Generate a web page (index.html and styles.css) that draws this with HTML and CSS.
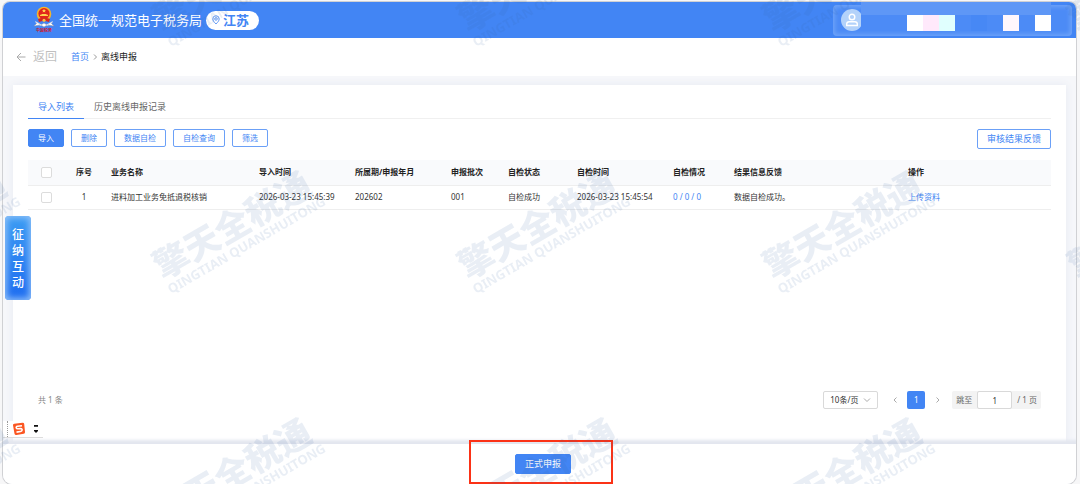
FILE: index.html
```html
<!DOCTYPE html>
<html lang="zh-CN">
<head>
    <meta charset="UTF-8">
    <meta name="viewport" content="width=device-width, initial-scale=1.0">
    <title>离线申报</title>
    <link rel="stylesheet" href="styles.css">
</head>
<body>
    <div class="window">
        <header class="topbar">
            <svg class="emblem" viewBox="0 0 20 28">
                <path d="M1 15 Q2 20 10 20 Q18 20 19 15 L17 16 Q10 21 3 16Z" fill="#d9dde6"/>
                <path d="M3 17 L0 20 L6 19 M17 17 L20 20 L14 19 M7 19 L10 17 L13 19 L10 21Z" fill="#fff" stroke="#8d94a6" stroke-width=".5"/>
                <circle cx="10" cy="8" r="7.3" fill="#f4b52b"/>
                <circle cx="10" cy="7.6" r="5.6" fill="#e1251b"/>
                <path d="M10 2.8l.6 1.3 1.4.1-1 .9.3 1.4-1.3-.7-1.3.7.3-1.4-1-.9 1.4-.1zM6 10h8v-1.2h-1.5V8h-5v.8H6z" fill="#ffd34d"/>
                <path d="M4 13 Q10 10.5 16 13 L15 16 Q10 14 5 16Z" fill="#d6281f"/>
                <circle cx="10" cy="14.2" r="1.5" fill="#f7c640"/>
                <text x="10" y="26" class="emblem-text">中国税务</text>
            </svg>
            <h1 class="site-name">全国统一规范电子税务局</h1>
            <button class="region">
                <svg class="pin" viewBox="0 0 10 12">
                    <path d="M5 11 C2 8 1 6.5 1 4.7 A4 4 0 0 1 9 4.7 C9 6.5 8 8 5 11Z"/>
                    <circle cx="5" cy="4.7" r="1.6"/>
                </svg>江苏
            </button>
            <div class="user">
                <span class="avatar">
                    <svg viewBox="0 0 14 14">
                        <circle cx="7" cy="4" r="2.8"/>
                        <path d="M1.7 12.5 V11 Q1.7 8.7 4.2 8.7 H9.8 Q12.3 8.7 12.3 11 V12.5Z"/>
                    </svg>
                </span>
                <div class="mask">
                    <i class="b0"></i><i class="w"></i><i class="pink"></i><i class="cyan"></i>
                    <i class="b1"></i><i class="b2"></i><i class="b1"></i><i class="rose"></i><i class="b1"></i><i class="w"></i>
                </div>
            </div>
        </header>

        <nav class="crumbs">
            <a class="back" href="#">
                <svg viewBox="0 0 10 10"><path d="M9.5 5H1M5 1L1 5l4 4"/></svg>返回
            </a>
            <a class="home" href="#">首页</a>
            <svg class="sep" viewBox="0 0 4 6"><path d="M1 .5L3.5 3 1 5.5"/></svg>
            <span>离线申报</span>
        </nav>

        <main class="content">
            <section class="card">
                <div class="tabs">
                    <button class="tab active">导入列表</button>
                    <button class="tab">历史离线申报记录</button>
                </div>

                <div class="toolbar">
                    <button class="btn primary">导入</button>
                    <button class="btn">删除</button>
                    <button class="btn">数据自检</button>
                    <button class="btn">自检查询</button>
                    <button class="btn">筛选</button>
                    <button class="btn large feedback">审核结果反馈</button>
                </div>

                <table class="list">
                    <colgroup>
                        <col class="c-check"><col class="c-seq"><col class="c-name"><col class="c-time">
                        <col class="c-time"><col class="c-batch"><col class="c-status"><col class="c-time">
                        <col class="c-result"><col class="c-info"><col>
                    </colgroup>
                    <thead>
                        <tr>
                            <th class="center"><input type="checkbox" aria-label="全选"></th>
                            <th class="center">序号</th>
                            <th>业务名称</th>
                            <th>导入时间</th>
                            <th>所属期/申报年月</th>
                            <th>申报批次</th>
                            <th>自检状态</th>
                            <th>自检时间</th>
                            <th>自检情况</th>
                            <th>结果信息反馈</th>
                            <th>操作</th>
                        </tr>
                    </thead>
                    <tbody>
                        <tr>
                            <td class="center"><input type="checkbox" aria-label="选择第1条"></td>
                            <td class="center">1</td>
                            <td>进料加工业务免抵退税核销</td>
                            <td>2026-03-23 15:45:39</td>
                            <td>202602</td>
                            <td>001</td>
                            <td>自检成功</td>
                            <td>2026-03-23 15:45:54</td>
                            <td><a href="#">0 / 0 / 0</a></td>
                            <td>数据自检成功。</td>
                            <td><a href="#">上传资料</a></td>
                        </tr>
                    </tbody>
                </table>

                <div class="pager">
                    <span class="total">共 1 条</span>
                    <div class="size">
                        <select aria-label="每页条数"><option>10条/页</option></select>
                        <svg viewBox="0 0 8 5"><path d="M1 .5l3 3 3-3"/></svg>
                    </div>
                    <button class="arrow" aria-label="上一页"><svg viewBox="0 0 4 6"><path d="M3.5 .5L1 3l2.5 2.5"/></svg></button>
                    <button class="page">1</button>
                    <button class="arrow" aria-label="下一页"><svg viewBox="0 0 4 6"><path d="M.5 .5L3 3 .5 5.5"/></svg></button>
                    <label class="jump">跳至 <input type="text" value="1"> / 1 页</label>
                </div>
            </section>
        </main>

        <footer class="actions">
            <div class="submit">
                <button class="btn primary large">正式申报</button>
                <span class="highlight"></span>
            </div>
        </footer>
    </div>

    <button class="interact">征纳互动</button>

    <div class="ime">
        <svg viewBox="0 0 14 14">
            <path d="M1 3.3Q.8 2 2.2 1.8L10.5.7Q12 .5 12.2 2L13 10Q13.2 11.5 11.7 11.8L4.5 13Q2.8 13.2 2.5 11.7Z" fill="#fb5622"/>
            <path d="M10 3.7L5.5 4.3Q3.8 4.7 4.3 6Q4.6 6.9 6 6.8L8.7 6.6Q10.2 6.7 10.1 8Q10 9.3 8.5 9.5L4.5 10.1" fill="none" stroke="#fff" stroke-width="1.6"/>
        </svg>
        <svg class="ime-menu" viewBox="0 0 4 8"><path d="M0 0h4v1.8H0zM0 5h4v1L2 8 0 6z"/></svg>
    </div>

    <svg class="watermark" aria-hidden="true">
        <defs>
            <pattern id="mark" x="100" y="130" width="305" height="247" patternUnits="userSpaceOnUse">
                <g transform="translate(64 152) rotate(-30)">
                    <text class="mark-cn" x="0" y="-2">擎天全税通</text>
                    <text class="mark-en" x="0" y="14">QINGTIAN QUANSHUITONG</text>
                </g>
            </pattern>
        </defs>
        <rect width="100%" height="100%" fill="url(#mark)"/>
    </svg>
</body>
</html>
```

FILE: styles.css
```css
* {
    box-sizing: border-box;
}

body {
    margin: 0;
    padding: 2px 4px 0 3px;
    min-height: 100vh;
    background: #f7f7f8;
    font-family: "Noto Sans", "Noto Sans CJK SC", sans-serif;
    font-size: 8px;
    line-height: 12px;
    color: #333;
    display: flex;
    overflow: hidden;
}

button, input, select {
    font: inherit;
    color: inherit;
    margin: 0;
}

button {
    padding: 0;
    border: none;
    background: none;
    cursor: pointer;
    white-space: nowrap;
}

a {
    color: #4285f4;
    text-decoration: none;
}

svg {
    fill: none;
    stroke-width: 1;
}

.window {
    flex: 1;
    min-width: 0;
    display: flex;
    flex-direction: column;
    background: #f6f7fa;
    border-radius: 7px 7px 9px 9px;
    box-shadow: 0 0 0 1px #d0d1d4;
    overflow: hidden;
}

/* header */
.topbar {
    height: 36px;
    padding: 0 4px 0 31px;
    background: #4285f4;
    display: flex;
    align-items: center;
}

.emblem {
    width: 20px;
    height: 28px;
}

.emblem-text {
    font-size: 4px;
    font-weight: bold;
    text-anchor: middle;
    fill: #c92035;
}

.site-name {
    margin: 0 4px 0 5px;
    font-size: 13px;
    line-height: 20px;
    font-weight: 400;
    color: #fff;
    white-space: nowrap;
}

.region {
    height: 19px;
    padding: 0 10px 0 6px;
    border-radius: 10px;
    background: #fff;
    color: #4285f4;
    font-size: 13px;
    line-height: 19px;
    font-weight: 700;
    display: flex;
    align-items: center;
    gap: 3px;
}

.pin {
    width: 8px;
    height: 10px;
    stroke: #4285f4;
}

.user {
    position: relative;
    width: 239px;
    height: 31px;
    margin-left: auto;
    padding-left: 8px;
    border-radius: 4px;
    background: #4c8bf6;
    box-shadow: inset 0 0 4px 2px #6ea3f8;
    display: flex;
    align-items: center;
}

.avatar {
    width: 22px;
    height: 22px;
    border-radius: 50%;
    background: #b3d2fa;
    display: flex;
    align-items: center;
    justify-content: center;
}

.avatar svg {
    width: 14px;
    height: 14px;
    stroke: #fff;
    stroke-width: 1.4;
}

.mask {
    position: absolute;
    top: -5px;
    right: 21px;
    width: 190px;
    height: 31px;
    padding-top: 15px;
    background: #5e97f6;
    display: flex;
}

.mask i {
    flex: 0 0 16px;
    background: #4c8bf6;
}

.mask .b0 { flex: 1; }
.mask .b2 { background: #4788f5; }
.mask .w { background: #fff; }
.mask .pink { background: #ffe9fb; }
.mask .cyan { background: #e0fffe; }
.mask .rose { background: #fff7fc; }

/* breadcrumb */
.crumbs {
    height: 38px;
    padding-left: 13px;
    background: #fff;
    font-size: 9px;
    display: flex;
    align-items: center;
    color: #222;
}

.back {
    margin-right: 14px;
    font-size: 12px;
    color: #bfbfbf;
    display: flex;
    align-items: center;
    gap: 7px;
}

.back svg {
    width: 10px;
    height: 10px;
    stroke: #aaa;
}

.sep {
    width: 4px;
    height: 6px;
    margin: 0 4px;
    stroke: #999;
}

/* card */
.content {
    flex: 1;
    padding: 9px 10px 0;
    display: flex;
}

.card {
    flex: 1;
    min-width: 0;
    padding: 11px 15px 35px;
    background: #fff;
    box-shadow: 0 0 8px #e6e9f2;
    display: flex;
    flex-direction: column;
}

.tabs {
    height: 23px;
    border-bottom: 1px solid #f0f0f0;
    display: flex;
}

.tab {
    height: 23px;
    padding: 0 10px;
    font-size: 9px;
    color: #666;
    border-bottom: 1px solid transparent;
}

.tab.active {
    color: #4285f4;
    border-color: #4285f4;
}

.toolbar {
    margin: 10px 0;
    height: 21px;
    display: flex;
    align-items: flex-start;
    gap: 7px;
}

.btn {
    height: 18px;
    padding: 0 9px;
    border: 1px solid #6ba0f7;
    border-radius: 2px;
    background: #fff;
    color: #4285f4;
}

.btn.primary {
    background: #4285f4;
    border-color: #4285f4;
    color: #fff;
}

.btn.large {
    height: 20px;
    font-size: 9px;
}

.feedback {
    margin-left: auto;
}

/* table */
.list {
    width: 100%;
    table-layout: fixed;
    border-collapse: collapse;
    white-space: nowrap;
}

.c-check { width: 36px; }
.c-seq { width: 40px; }
.c-name { width: 148px; }
.c-time { width: 96px; }
.c-batch { width: 57px; }
.c-status { width: 69px; }
.c-result { width: 61px; }
.c-info { width: 174px; }

.list th, .list td {
    height: 24px;
    padding: 0 7px;
    border-bottom: 1px solid #eee;
    text-align: left;
}

.list th {
    height: 25px;
    background: #f9fafc;
    font-weight: 700;
    color: #222;
}

.list .center {
    padding: 0;
    text-align: center;
}

.list input {
    appearance: none;
    display: block;
    width: 11px;
    height: 11px;
    margin: 0 auto;
    border: 1px solid #dcdcdc;
    border-radius: 2px;
    background: #fff;
}

/* pagination */
.pager {
    margin-top: auto;
    padding: 0 10px;
    height: 18px;
    display: flex;
    align-items: center;
}

.total {
    margin-right: auto;
    color: #888;
}

.size {
    position: relative;
    margin-right: 12px;
}

.size select {
    appearance: none;
    display: block;
    width: 55px;
    height: 18px;
    padding: 0 6px;
    border: 1px solid #d9d9d9;
    border-radius: 2px;
    background: #fff;
}

.size svg {
    position: absolute;
    top: 7px;
    right: 7px;
    width: 8px;
    height: 5px;
    stroke: #aaa;
    pointer-events: none;
}

.arrow {
    width: 9px;
    height: 18px;
    display: flex;
    align-items: center;
    justify-content: center;
}

.arrow svg {
    width: 4px;
    height: 6px;
    stroke: #aaa;
}

.page {
    width: 18px;
    height: 18px;
    margin: 0 8px;
    border-radius: 2px;
    background: #4285f4;
    color: #fff;
}

.jump {
    height: 18px;
    margin-left: 10px;
    padding: 0 4px;
    border-radius: 2px;
    background: #f3f3f3;
    color: #666;
    display: flex;
    align-items: center;
    gap: 5px;
}

.jump input {
    width: 35px;
    height: 18px;
    padding: 0;
    border: 1px solid #d9d9d9;
    border-radius: 2px;
    background: #fff;
    color: #333;
    text-align: center;
}

/* bottom bar */
.actions {
    position: relative;
    height: 40px;
    padding-left: 7px;
    background: #fff;
    box-shadow: 0 -2px 3px 2px #e3e6ef;
    display: flex;
    align-items: center;
    justify-content: center;
}

.submit {
    position: relative;
}

.submit .btn {
    display: block;
    width: 56px;
}

.highlight {
    position: absolute;
    inset: -14px -42px -10px -46px;
    border: 2px solid #fb3216;
    pointer-events: none;
}

/* floating pieces */
.interact {
    position: fixed;
    left: 5px;
    top: 216px;
    width: 26px;
    height: 84px;
    padding: 2px 7px 0;
    border-radius: 4px;
    background: linear-gradient(#3c9cf3, #1e6cf0);
    box-shadow: inset 0 0 6px 2px #8fc0f8;
    color: #fff;
    font-size: 12px;
    line-height: 16px;
    font-weight: 500;
    white-space: normal;
}

.ime {
    position: fixed;
    left: 3px;
    top: 421px;
    width: 40px;
    height: 17px;
    padding-left: 4px;
    background: #fff;
    border-bottom: 1px solid #ddd;
    display: flex;
    align-items: center;
}

.ime::before {
    content: "";
    height: 16px;
    margin-right: 4px;
    border-left: 1px dotted #999;
}

.ime svg {
    width: 14px;
    height: 14px;
}

.ime .ime-menu {
    width: 4px;
    height: 8px;
    margin-left: 8px;
    fill: #111;
}

.watermark {
    position: fixed;
    inset: 0;
    width: 100%;
    height: 100%;
    pointer-events: none;
}

.mark-cn, .mark-en {
    fill: #3567a0;
    fill-opacity: .11;
}

.mark-cn {
    font-size: 35px;
    font-weight: 900;
}

.mark-en {
    font-size: 13px;
    font-weight: 700;
}
```
